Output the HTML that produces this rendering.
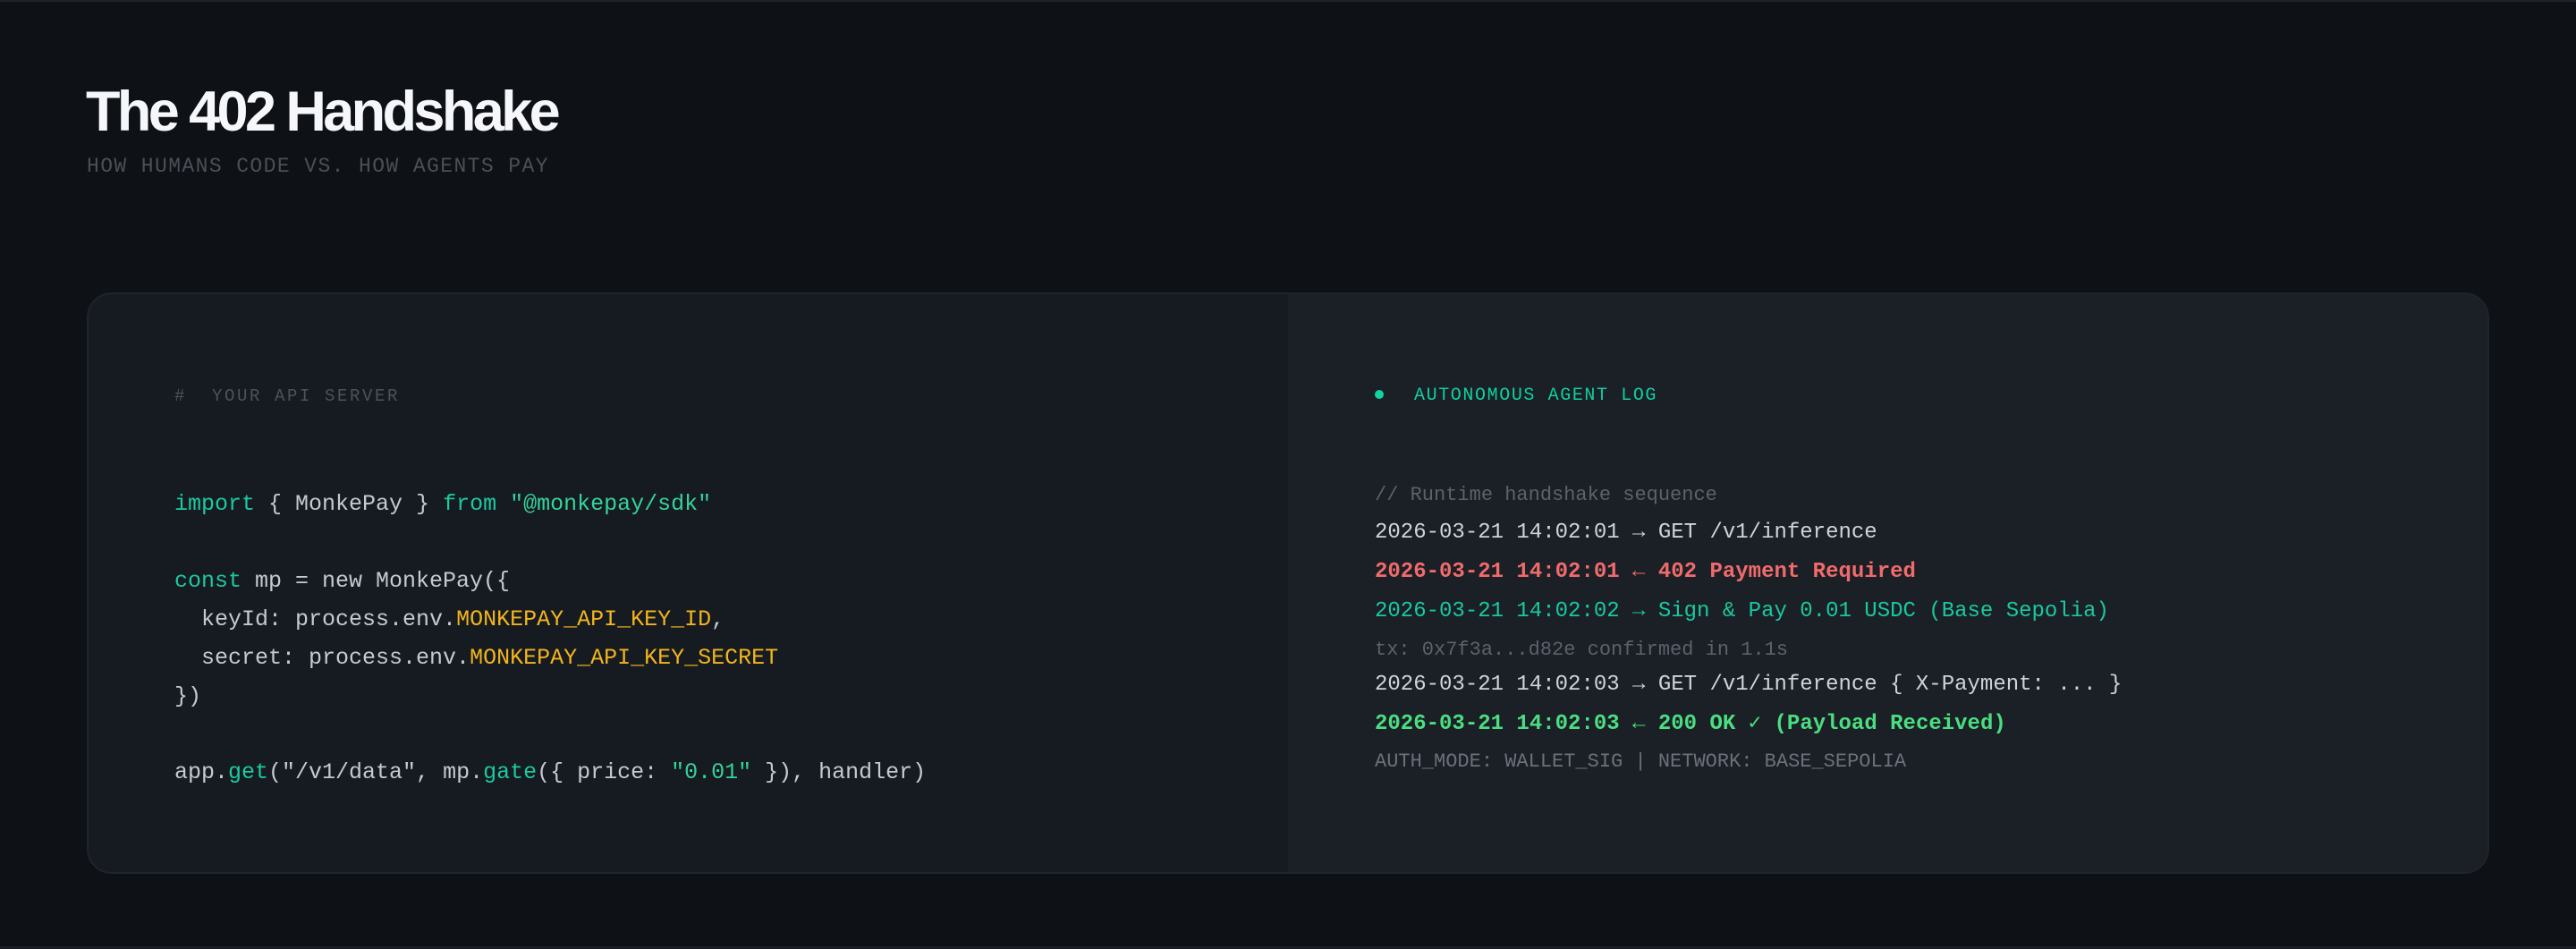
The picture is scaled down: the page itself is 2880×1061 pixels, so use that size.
<!DOCTYPE html>
<html><head><meta charset="utf-8"><style>
*{margin:0;padding:0;box-sizing:border-box}
body{width:2880px;height:1061px;background:#0e1216;position:relative;overflow:hidden;font-family:"Liberation Mono","DejaVu Sans Mono",monospace}
.topline{position:absolute;left:0;top:0;width:2880px;height:2px;background:#1e232a}
.botline{position:absolute;left:0;bottom:0;width:2880px;height:3px;background:#1a1e24}
.t{position:absolute;line-height:1;white-space:pre}
h1{position:absolute;left:96px;top:94px;font-family:"Liberation Sans",sans-serif;font-weight:700;font-size:63px;line-height:1;letter-spacing:-3.6px;color:#f6f7fb}
.card{position:absolute;left:97px;top:327px;width:2686px;height:650px;border-radius:28px;background:#161a21;border:2px solid #20242b;overflow:hidden}
.right{position:absolute;left:1341px;top:0;width:1345px;height:100%;background:#1b1f26}
.c{font-size:25px;color:#c5cad2}
.k{color:#1cc9a0}.s{color:#34d399}.y{color:#f2b51c}
.l{font-size:24px}
</style></head><body>
<div class="topline"></div>
<h1>The 402 Handshake</h1>
<div class="t" style="left:97px;top:175px;font-size:23px;letter-spacing:1.4px;color:#4b5058">HOW HUMANS CODE VS. HOW AGENTS PAY</div>
<div class="card"><div class="right"></div></div>

<div class="t" style="left:195px;top:434px;font-size:19px;letter-spacing:2.6px;color:#4d535b">#  YOUR API SERVER</div>
<div class="t c" style="left:195px;top:551px"><span class="k">import</span> { MonkePay } <span class="k">from</span> <span class="s">"@monkepay/sdk"</span></div>
<div class="t c" style="left:195px;top:637px"><span class="k">const</span> mp = new MonkePay({</div>
<div class="t c" style="left:195px;top:680px">  keyId: process.env.<span class="y">MONKEPAY_API_KEY_ID</span>,</div>
<div class="t c" style="left:195px;top:723px">  secret: process.env.<span class="y">MONKEPAY_API_KEY_SECRET</span></div>
<div class="t c" style="left:195px;top:766px">})</div>
<div class="t c" style="left:195px;top:851px">app.<span class="k">get</span>("/v1/data", mp.<span class="k">gate</span>({ price: <span class="s">"0.01"</span> }), handler)</div>

<div style="position:absolute;left:1537px;top:436px;width:10px;height:10px;border-radius:50%;background:#10d3a0"></div>
<div class="t" style="left:1581px;top:433px;font-size:20px;letter-spacing:1.6px;color:#10cfa0">AUTONOMOUS AGENT LOG</div>
<div class="t" style="left:1537px;top:543px;font-size:22px;color:#5c626b">// Runtime handshake sequence</div>
<div class="t l" style="left:1537px;top:584px;color:#d0d4da">2026-03-21 14:02:01 → GET /v1/inference</div>
<div class="t l" style="left:1537px;top:628px;color:#f06b6b;font-weight:700">2026-03-21 14:02:01 ← 402 Payment Required</div>
<div class="t l" style="left:1537px;top:672px;color:#19c9a0">2026-03-21 14:02:02 → Sign &amp; Pay 0.01 USDC (Base Sepolia)</div>
<div class="t" style="left:1537px;top:716px;font-size:22px;color:#5c626b">tx: 0x7f3a...d82e confirmed in 1.1s</div>
<div class="t l" style="left:1537px;top:754px;color:#d0d4da">2026-03-21 14:02:03 → GET /v1/inference { X-Payment: ... }</div>
<div class="t l" style="left:1537px;top:798px;color:#4ade80;font-weight:700">2026-03-21 14:02:03 ← 200 OK ✓ (Payload Received)</div>
<div class="t" style="left:1537px;top:841px;font-size:22px;color:#6b717a">AUTH_MODE: WALLET_SIG | NETWORK: BASE_SEPOLIA</div>
<div class="botline"></div>
</body></html>
